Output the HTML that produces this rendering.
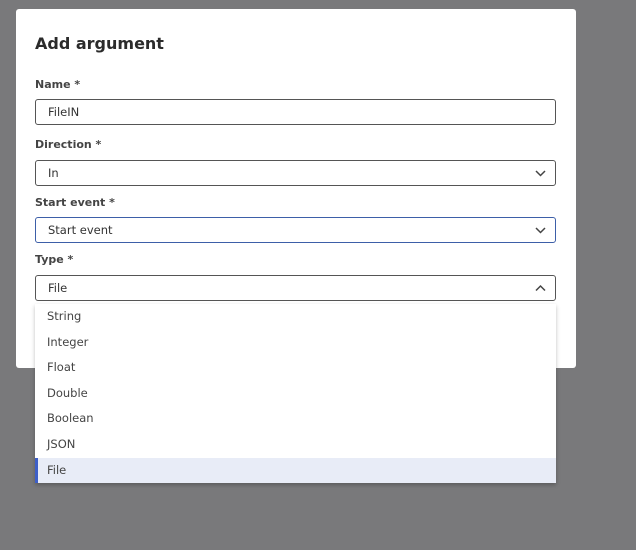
<!DOCTYPE html>
<html><head><style>
*{box-sizing:border-box;margin:0;padding:0}
body{width:636px;height:550px;background:#79797b;font-family:"DejaVu Sans","Liberation Sans",sans-serif;position:relative;overflow:hidden;color:#333}
.modal{position:absolute;left:16px;top:9px;width:560px;height:359px;background:#fff;border-radius:3px}
h1{position:absolute;left:35px;top:34px;font-size:16px;font-weight:bold;color:#2b2b2b}
.lbl{position:absolute;left:35px;font-size:11px;font-weight:bold;color:#444}
.inp{position:absolute;left:35px;width:521px;height:26px;border:1px solid #555;border-radius:3px;background:#fff;font-size:11.5px;padding:0 0 0 12px;line-height:25px;color:#333}
.inp.blue{border-color:#3d5fa8}
.inp svg{position:absolute;right:9px;top:8px}
.dd{position:absolute;left:35px;top:304px;width:521px;height:179px;background:#fff;box-shadow:0 2px 4px rgba(0,0,0,.25)}
.it{height:25.6px;line-height:25.6px;font-size:11.5px;padding-left:12px;color:#444}
.it.sel{background:#e8ecf7;border-left:3px solid #3d5fc8;padding-left:9px}
</style></head><body>
<div class="modal"></div>
<h1>Add argument</h1>
<div class="lbl" style="top:78px">Name *</div>
<div class="inp" style="top:99px">FileIN</div>
<div class="lbl" style="top:138px">Direction *</div>
<div class="inp" style="top:160px">In<svg width="11" height="8" viewBox="0 0 11 8"><path d="M1 2l4.5 4.5L10 2" fill="none" stroke="#444" stroke-width="1.5"/></svg></div>
<div class="lbl" style="top:196px">Start event *</div>
<div class="inp blue" style="top:217px">Start event<svg width="11" height="8" viewBox="0 0 11 8"><path d="M1 2l4.5 4.5L10 2" fill="none" stroke="#444" stroke-width="1.5"/></svg></div>
<div class="lbl" style="top:253px">Type *</div>
<div class="inp" style="top:275px">File<svg width="11" height="8" viewBox="0 0 11 8"><path d="M1 6.5L5.5 2 10 6.5" fill="none" stroke="#444" stroke-width="1.5"/></svg></div>
<div class="dd">
<div class="it">String</div><div class="it">Integer</div><div class="it">Float</div><div class="it">Double</div><div class="it">Boolean</div><div class="it">JSON</div><div class="it sel">File</div>
</div>
</body></html>
